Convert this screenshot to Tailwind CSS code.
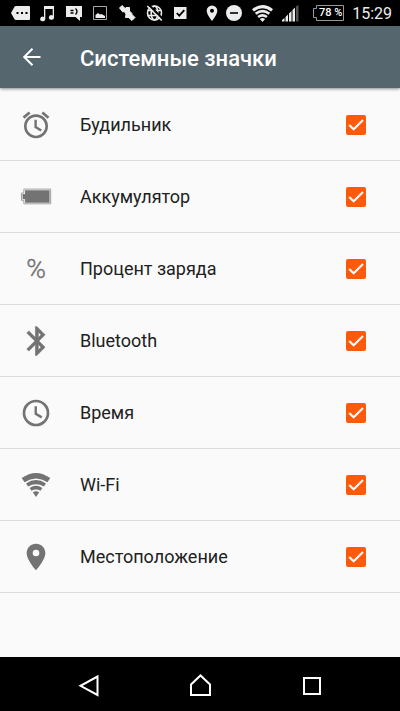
<!DOCTYPE html>
<html lang="ru">
<head>
<meta charset="utf-8">
<meta name="viewport" content="width=device-width, initial-scale=1">
<title>Системные значки</title>
<script src="https://cdn.jsdelivr.net/npm/@tailwindcss/browser@4"></script>
</head>
<body class="flex min-h-screen flex-col bg-[#fafafa] font-['Roboto',sans-serif] text-[#212121]">

<!-- Status bar -->
<div class="flex h-[26px] items-center bg-black pl-[10px] pr-2 text-[#ececec]">
  <div class="flex w-[181px] justify-between">
    <svg class="size-5" viewBox="0 0 20 20" fill="currentColor"><path d="M6 3h13a1 1 0 0 1 1 1v12a1 1 0 0 1-1 1H6a2 2 0 0 1-1.5-.8L1 10l3.500-6.200A2 2 0 0 1 6 3z"/><path fill="#000" d="M6.500 9h2v2h-2zM11 9h2v2h-2zM15.500 9h2v2h-2z"/></svg>
    <svg class="size-5" viewBox="0 0 20 20" fill="currentColor"><path d="M7 3h10v11.500a2.600 2.300 0 1 1-1.300-2V6H8.300v10a2.600 2.300 0 1 1-1.300-2z"/></svg>
    <svg class="size-5" viewBox="0 0 20 20" fill="currentColor"><path d="M2 3h16v11h-2v4L11.500 14H2z"/><path d="M6.500 7.500h3M6.500 10h3M11.500 5.500q3 3 0 6" fill="none" stroke="#000" stroke-width="1.300"/></svg>
    <svg class="size-5" viewBox="0 0 20 20" fill="currentColor"><path d="M3.500 3.500h13v13h-13z" fill="none" stroke="#aaa"/><path d="M5.500 15v-3l2.500-2 2 1.500 1.500-.5 3.500 2V15z"/></svg>
    <svg class="size-5" viewBox="0 0 20 20" fill="currentColor" stroke="currentColor" stroke-linejoin="round"><path d="M2.500 5L5 2.500l4 3.700-3 3zM11.500 14.500l3-3.500 3.500 3.500-3 3z"/><path d="M6.500 7.500L9 4.500h3.500v3.500l2.500 2.500-2.500 4H8.500l.5-3.500z"/></svg>
    <svg class="size-5" viewBox="0 0 20 20" fill="none" stroke="currentColor" stroke-width="1.600"><circle cx="10.500" cy="10" r="7"/><ellipse cx="10.500" cy="10" rx="3.300" ry="7"/><path d="M3.500 7.500h14M3.500 12.500h14"/><path d="M5 2l14 14" stroke="#000" stroke-width="2"/><path d="M3.300 3l14.500 14.500" stroke-width="1.700"/></svg>
    <svg class="size-5" viewBox="0 0 20 20"><path fill="currentColor" d="M3 4h12.500v12H3z"/><path d="M5.800 10l2.500 2.700 5-5.500" fill="none" stroke="#000" stroke-width="1.800"/></svg>
  </div>
  <div class="ml-auto flex items-center gap-2">
    <svg class="h-5 w-3" viewBox="0 0 12 20"><path fill="currentColor" fill-rule="evenodd" d="M6 2.500a5.300 5.300 0 0 0-5.300 5.300C.7 11.800 6 18 6 18s5.300-6.200 5.300-10.200A5.300 5.300 0 0 0 6 2.500zm0 3.300a2 2 0 1 1 0 4 2 2 0 0 1 0-4z"/></svg>
    <svg class="h-5 w-4" viewBox="0 0 16 20"><circle cx="8" cy="10" r="8" fill="currentColor"/><path d="M4 9.200h8v1.600H4z" fill="#000"/></svg>
    <svg class="ml-0.5 h-5 w-[21px]" viewBox="0 0 30 26" fill="currentColor"><path d="M0 7.500Q15-4.500 30 7.500L27.300 11Q15 1.500 2.700 11zM4 12.500Q15 4 26 12.500L23.600 15.600Q15 9.300 6.400 15.600zM7.600 17.200Q15 11.800 22.400 17.200L20.100 20Q15 16.500 9.900 20zM11.200 21.500Q15 19 18.800 21.500L15 26z"/></svg>
    <svg class="h-5 w-[18px]" viewBox="0 0 18 20" fill="currentColor"><path d="M1 17l2.500-2v3.500H1zM4.500 14L7 11.500v7H4.500zM8 10.500L10.500 8v10.500H8zM11.500 7L14 4.500v14h-2.500z"/><path fill="#555" d="M15 3.500l2.500-1.500v16.500H15z"/></svg>
    <div class="relative ml-1.5 flex h-4 w-[31px] items-center justify-center pl-1 text-[11px] font-medium text-white">
      <svg class="absolute inset-0 size-full" viewBox="0 0 31 16" fill="none" stroke="#999"><path d="M3.500.5h27v15h-27v-3h-3v-9h3z"/></svg>
      <span class="relative whitespace-nowrap">78 %</span>
    </div>
    <span class="pt-0.5 text-base">15:29</span>
  </div>
</div>

<!-- App bar -->
<header class="relative flex h-[62px] items-center bg-[#56666e] pl-5 text-white shadow-[0_1px_3px_rgba(0,0,0,0.45)]">
  <button type="button" aria-label="Назад" class="flex size-6 items-center justify-center">
    <svg class="size-6" viewBox="0 0 24 24" fill="none" stroke="currentColor" stroke-width="2"><path d="M20.500 12H4.500M12.500 3.700L4.200 12l8.300 8.300"/></svg>
  </button>
  <h1 class="ml-9 pt-0.5 text-[22px] font-medium">Системные значки</h1>
</header>

<!-- Icon switches -->
<main class="grow pt-px">
  <ul id="list"></ul>
</main>

<!-- Navigation bar -->
<nav class="flex h-[54px] items-center justify-center gap-[79px] bg-black text-white">
  <button type="button" aria-label="Назад" class="size-8"><svg class="size-8" viewBox="0 0 32 32" fill="none" stroke="currentColor" stroke-width="2"><path d="M24.500 8.500v18.500L7.500 17.800z"/></svg></button>
  <button type="button" aria-label="Домой" class="size-8"><svg class="size-8" viewBox="0 0 32 32" fill="none" stroke="currentColor" stroke-width="2"><path d="M7 27V16.500L16.500 7.500l9.500 9V27z"/></svg></button>
  <button type="button" aria-label="Недавние" class="size-8"><svg class="size-8" viewBox="0 0 32 32" fill="none" stroke="currentColor" stroke-width="2"><path d="M9 10h16v16H9z"/></svg></button>
</nav>

<script>
const rows = [
  ['alarm', 'Будильник', '<path fill="currentColor" d="M22 5.720l-4.600-3.860-1.290 1.530 4.600 3.860L22 5.720zM7.880 3.390L6.600 1.860 2 5.710l1.290 1.530 4.590-3.850zM12 4c-4.970 0-9 4.030-9 9s4.020 9 9 9a9 9 0 0 0 0-18zm0 16c-3.870 0-7-3.130-7-7s3.130-7 7-7 7 3.130 7 7-3.130 7-7 7z"/><path d="M11.700 8v5.600l4.200 2.600" fill="none" stroke="currentColor" stroke-width="1.800"/>'],
  ['battery', 'Аккумулятор', '<path d="M2.900 6.100H23v11H2.900v-2.600H1.100V9h1.800z" fill="#fff" stroke="#999" stroke-width=".7"/><path fill="currentColor" d="M3.800 6.900h18.400v9.400H3.800v-2.600H1.900v-3.900h1.900z"/>'],
  ['percent', 'Процент заряда', '<text x="12" y="19" text-anchor="middle" font-size="20" font-weight="300" fill="currentColor" stroke="currentColor" stroke-width=".3">%</text>'],
  ['bluetooth', 'Bluetooth', '<path fill="currentColor" d="M17.710 7.710L12 2h-1v7.590L6.410 5 5 6.410 10.590 12 5 17.590 6.410 19 11 14.410V22h1l5.710-5.710-4.300-4.290 4.300-4.290zM13 5.830l1.880 1.880L13 9.590V5.830zm1.880 10.460L13 18.170v-3.760l1.880 1.880z" stroke="currentColor" stroke-width=".4" transform="translate(12 12) scale(1.080) translate(-11.400 -12)"/>'],
  ['time', 'Время', '<path fill="currentColor" d="M12 2a10 10 0 1 0 0 20 10 10 0 0 0 0-20zm0 18a8 8 0 1 1 0-16 8 8 0 0 1 0 16z"/><path d="M11.800 7v5.600l4.500 2.700" fill="none" stroke="currentColor" stroke-width="1.800"/>'],
  ['wifi', 'Wi-Fi', '<path fill="currentColor" d="M1.300 6.800Q12-.9 22.700 6.800L20.600 9.900Q12 4.300 3.400 9.900zM4.500 10.800Q12 5.800 19.500 10.800L17.900 13.200Q12 9.600 6.100 13.200zM7.200 14.200Q12 11.100 16.800 14.200L15.400 16.300Q12 14.300 8.600 16.300zM9.600 17.400Q12 16 14.400 17.400L12 21z"/>'],
  ['location', 'Местоположение', '<path fill="currentColor" d="M12 2C8.130 2 5 5.130 5 9c0 5.250 7 13 7 13s7-7.750 7-13c0-3.870-3.130-7-7-7zm0 9.500a2.500 2.500 0 1 1 0-5 2.500 2.500 0 0 1 0 5z"/>']
];
document.getElementById('list').innerHTML = rows.map(([id, name, icon]) => `
  <li class="border-b border-[#dcdcdc]">
    <label for="${id}" class="flex h-[71px] items-center pl-5 pr-[34px]">
      <svg class="size-8 shrink-0 text-[#737373]" viewBox="0 0 24 24">${icon}</svg>
      <span class="ml-7 grow text-lg">${name}</span>
      <span class="grid size-5 shrink-0 place-items-center">
        <input id="${id}" type="checkbox" checked class="peer col-start-1 row-start-1 size-5 appearance-none rounded-xs border-2 border-[#737373] checked:border-[#ff5a09] checked:bg-[#ff5a09]">
        <svg class="pointer-events-none invisible col-start-1 row-start-1 size-5 peer-checked:visible" viewBox="0 0 20 20" fill="none" stroke="#fff" stroke-width="2"><path d="M3.200 10L7.700 14.300 17 5"/></svg>
      </span>
    </label>
  </li>`).join('');
</script>
</body>
</html>
